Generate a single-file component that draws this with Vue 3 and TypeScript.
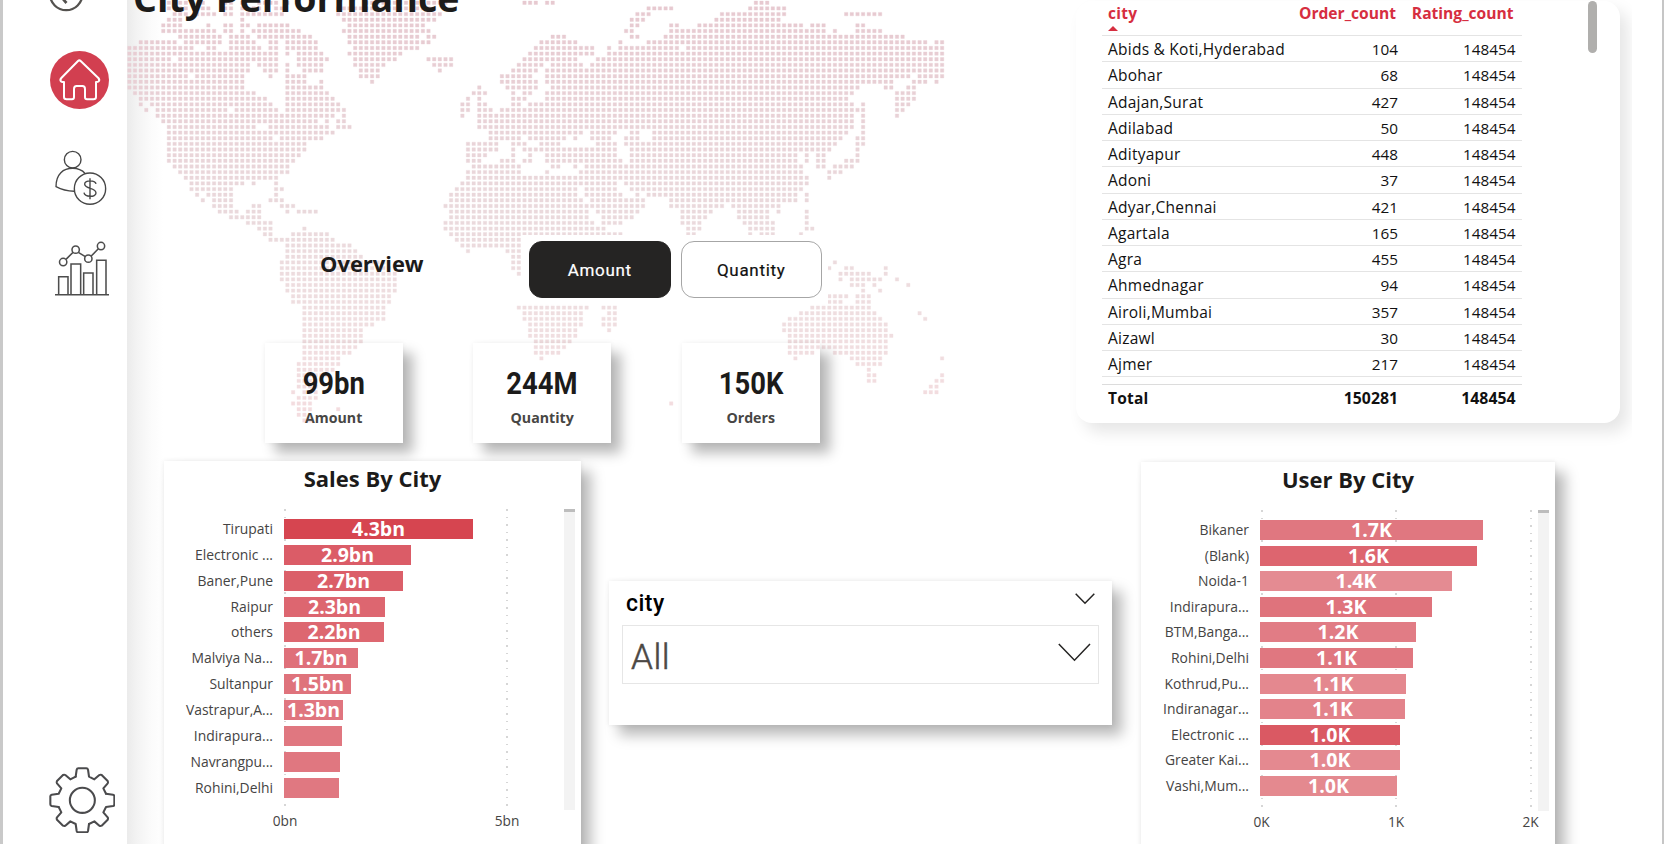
<script setup lang="ts">
interface Bar {
  label: string
  value: string
  width: number
  color: string
}
interface Chart {
  id: string
  title: string
  bars: Bar[]
  ticks: { at: number; text: string }[]
}

const PITCH = 5.644
const DOT = 3.4

// Land cells of the dotted world map, one entry per row, as column ranges.
const mapRows: string[] = [
  '7-10,13,17-18,20,23-26,28,42-56,70-72,74-75,111-113',
  '7-10,13-14,17-18,20,22-23,26-27,37-54,92-96,110-116',
  '8-10,12-15,17-18,20-27,37-55,90-92,105-116,127-133',
  '7-9,20,38-54,89-91,104-115',
  '6-9,14,17-18,20-21,23-28,39-52,89-90,96-97,101-119,121-123,129-130',
  '6-15,17-18,20,22-30,38-53,88-89,96-123,125,129-133',
  '9-16,18-21,23-32,39-51,53-54,75-77,89-90,95-137',
  '2-8,10-16,18-22,25-26,28-33,39-53,73-79,87,92-141,143-144',
  '0-11,14-15,18-23,25-26,28-33,40-51,72-82,85,87-97,99-144',
  '0-26,28,30-34,39-48,71-82,85-144',
  '0-7,9-26,30-35,40-47,53-57,70-79,83-144',
  '0-21,23-26,28,30-34,40-45,54-57,69-73,75-80,82-144',
  '0-21,24-26,28,31-34,41-44,55,68-72,74-144',
  '0-10,12-20,25,28-31,41-44,66-71,74-138,140-144',
  '0-20,28-31,34,43,66-72,74-135,139-141,143',
  '0-20,28-34,62,67-72,75-129,134-135,138-139',
  '1-22,28-35,61-63,68,70-71,74-128,136-139',
  '2-24,28-36,60,62,68-70,74-127,136-139',
  '2,4-25,28-37,59-60,62-63,68-69,71-128,130,136-138',
  '3,5-17,19-26,28-38,59-60,62-64,66-130,136-137',
  '5-36,38,59,62-128,130,136',
  '6-33,35,37-38,62-128,130',
  '7-22,25-35,37-39,62-128,130',
  '7-23,24-36,64-80,82-86,89-90,93-127,130',
  '7-25,27-34,64-69,71-77,79,82-85,88-90,93-126,129-130',
  '7-31,60-65,68-70,73-76,83-86,88-125,129-130',
  '7-31,60-65,68,70-86,89-124,129',
  '7-30,60-63,68,71,74-86,89-118,120,122-123,129',
  '7-29,60-62,66-68,70-71,74-87,89-118,120,122-123,127-129',
  '8-28,61-69,75-76,79,81-87,88-119,122-123,125-128',
  '9-28,60-69,74,80-119,124-126',
  '10-26,60-120,124',
  '11-20,22,26,59-86,88-120',
  '11-18,26-27,58-79,81-86,89-119',
  '12,14-18,26,57-79,81-87,90,92-118,120',
  '13,15-18,25-27,57-80,82-91,96-118,120',
  '15-18,22-23,27-29,56-81,82-91,96-105,107-114,115',
  '16-19,21-23,28,30-33,57-81,83-90,98-103,108-113,115,120',
  '18-23,57-81,84-89,98-102,108-113,120',
  '21-25,56-82,84-87,98-101,109-114,120',
  '23-25,31,56-84,99-101,110-114,120-121',
  '24-25,29-35,57-87,99-100,110,112-114,119',
  '25-36,58-88',
  '28-39,59-88',
  '28-40,60,67-87',
  '28-41,68-87',
  '27-45,68-86,125',
  '27-46,68-85,124,127-128,134',
  '27-47,69-84,126-131,134',
  '27-47,70-80,126,128-133,136',
  '28-47,70-80,128-130,132,138',
  '28-47,70-80,130,133',
  '29-46,70-80,124-127,129-131',
  '29-46,70-80,122-126,129-131',
  '31-45,69-81,84-86,121-131',
  '31-45,70-80,85-86,119-132,140',
  '31-45,70-80,84-86,117-133,141',
  '31-43,71-80,84-86,116-134',
  '31-41,71-79,85,116-134',
  '31-41,71-79,117-135',
  '31-41,72-78,117-134',
  '31-40,72-77,117-134',
  '31-39,72-76,117-121,125-134',
  '31-37,73,118,128-133,144',
  '30-37,129-133',
  '30-36,131',
  '30-35,131-132,144',
  '30-33,131-132,143-144',
  '30-33,142-143',
  '29,31-33,141-143',
  '30-33',
  '29-32,96',
  '30-32,37',
  '30-31',
  '31-32',
]

const mapPath = mapRows
  .map((row, r) =>
    row
      .split(',')
      .map((range) => {
        const [from, to = from] = range.split('-').map(Number)
        let d = ''
        for (let c = from; c <= to; c++) {
          const x = (2.4 + c * PITCH - DOT / 2).toFixed(1)
          const y = (2.8 + r * PITCH - DOT / 2).toFixed(1)
          d += `M${x} ${y}h${DOT}v${DOT}h-${DOT}z`
        }
        return d
      })
      .join(''),
  )
  .join('')

const kpis = [
  { value: '99bn', label: 'Amount' },
  { value: '244M', label: 'Quantity' },
  { value: '150K', label: 'Orders' },
]

const cities: [string, number][] = [
  ['Abids & Koti,Hyderabad', 104],
  ['Abohar', 68],
  ['Adajan,Surat', 427],
  ['Adilabad', 50],
  ['Adityapur', 448],
  ['Adoni', 37],
  ['Adyar,Chennai', 421],
  ['Agartala', 165],
  ['Agra', 455],
  ['Ahmednagar', 94],
  ['Airoli,Mumbai', 357],
  ['Aizawl', 30],
  ['Ajmer', 217],
]

const bar = (label: string, value: string, width: number, color: string): Bar => ({ label, value, width, color })

const sales: Chart = {
  id: 'sales',
  title: 'Sales By City',
  bars: [
    bar('Tirupati', '4.3bn', 189, '#d64550'),
    bar('Electronic ...', '2.9bn', 127, '#db5c67'),
    bar('Baner,Pune', '2.7bn', 119, '#db5f69'),
    bar('Raipur', '2.3bn', 101, '#dd6670'),
    bar('others', '2.2bn', 100, '#dd6770'),
    bar('Malviya Na...', '1.7bn', 74, '#df707a'),
    bar('Sultanpur', '1.5bn', 67, '#df737c'),
    bar('Vastrapur,A...', '1.3bn', 59, '#e0757f'),
    bar('Indirapura...', '', 58, '#e07780'),
    bar('Navrangpu...', '', 56, '#e07780'),
    bar('Rohini,Delhi', '', 55, '#e07881'),
  ],
  ticks: [
    { at: 0, text: '0bn' },
    { at: 222, text: '5bn' },
  ],
}

const users: Chart = {
  id: 'users',
  title: 'User By City',
  bars: [
    bar('Bikaner', '1.7K', 223, '#e07780'),
    bar('(Blank)', '1.6K', 217, '#dd656f'),
    bar('Noida-1', '1.4K', 192, '#e48b92'),
    bar('Indirapura...', '1.3K', 172, '#df737c'),
    bar('BTM,Banga...', '1.2K', 156, '#e17c85'),
    bar('Rohini,Delhi', '1.1K', 153, '#e07780'),
    bar('Kothrud,Pu...', '1.1K', 146, '#e4888f'),
    bar('Indiranagar...', '1.1K', 145, '#e3838b'),
    bar('Electronic ...', '1.0K', 140, '#da5963'),
    bar('Greater Kai...', '1.0K', 140, '#e48990'),
    bar('Vashi,Mum...', '1.0K', 137, '#e4898f'),
  ],
  ticks: [
    { at: 0, text: '0K' },
    { at: 134.5, text: '1K' },
    { at: 269, text: '2K' },
  ],
}

const gearQuarters = [0, 90, 180, 270]
</script>

<template>
  <div class="page">
    <nav class="rail">
      <svg class="back" viewBox="0 0 36 24" fill="none" stroke="#54524f" stroke-width="2.3">
        <circle cx="18.200" cy="6" r="16.200" />
        <path d="M26 7H12M19.500 -1.500l-8 8.500l7 8" stroke-width="2.700" />
      </svg>
      <svg class="home" viewBox="0 0 177 174">
        <ellipse cx="88.500" cy="87" rx="88.500" ry="87" fill="#d23f50" />
        <path
          d="M84 30q4-4 8 0L145 81q5 6 1 10q-2 2-8 2V138q0 7-8 7H111q-6 0-6-6V114q0-9-8-9H80q-8 0-8 9V139q0 6-6 6H50q-8 0-8-7V93q-6 0-9-2q-4-4 1-10z"
          fill="none" stroke="#fff" stroke-width="6" stroke-linejoin="round" />
      </svg>
      <svg class="people" viewBox="0 0 156 166" fill="none" stroke="#474747" stroke-width="4.200">
        <circle cx="53" cy="29" r="25" />
        <path d="M57 124Q28 123 3 110C3 72 25 55 53 55Q76 55 91 71" />
        <circle cx="105" cy="116" r="47" />
        <path d="M105 85V148M123 102C121 90 89 89 89 102C89 118 123 112 123 129C123 143 89 142 87 128" />
      </svg>
      <svg class="stats" viewBox="0 0 162 164" fill="none" stroke="#4d4d4d" stroke-width="4.600">
        <path d="M0 161H162M11 161V107H39V161M48 161V69H77V161M86 161V96H114V161M125 161V58H153V161" />
        <path d="M33 55L54 34M70 34L91 47M108 46L130 23" />
        <circle cx="24.500" cy="63" r="11" />
        <circle cx="62" cy="26" r="11" />
        <circle cx="100" cy="53" r="11" />
        <circle cx="138" cy="15" r="11" />
      </svg>
      <svg class="gear" viewBox="-100 -100 200 200" fill="none" stroke="#4b4b4d" stroke-width="6.200" stroke-linejoin="round">
        <circle r="37.500" />
        <path
          v-for="angle in gearQuarters" :key="angle" :transform="`rotate(${angle})`" stroke-linecap="round"
          d="M-20 -71L-17 -92Q-16 -96 -12 -96H12Q16 -96 17 -92L20 -71L36 -63L51 -76Q54 -78 58 -76L76 -58Q78 -54 76 -51L63 -36L71 -20" />
      </svg>
    </nav>

    <main class="board">
      <svg class="world" width="818" height="424" viewBox="0 0 818 424">
        <defs>
          <linearGradient id="ink" x1="0" y1="0" x2="0" y2="424" gradientUnits="userSpaceOnUse">
            <stop offset="0" stop-color="#e7c9d0" />
            <stop offset="0.5" stop-color="#ead9dc" />
            <stop offset="0.75" stop-color="#efdee0" />
            <stop offset="1" stop-color="#f4dcdf" />
          </linearGradient>
        </defs>
        <path :d="mapPath" fill="url(#ink)" stroke="url(#ink)" stroke-opacity="0.4" stroke-width="0.9" />
      </svg>

      <div class="top">
        <section class="summary">
          <h1>City Performance</h1>
          <div class="controls">
            <h2>Overview</h2>
            <div class="switch">
              <button class="on">Amount</button>
              <button>Quantity</button>
            </div>
          </div>
          <div class="kpis">
            <div v-for="k in kpis" :key="k.label" class="kpi">
              <strong>{{ k.value }}</strong>
              <span>{{ k.label }}</span>
            </div>
          </div>
        </section>

        <div class="table-clip">
          <section class="table-card">
            <div class="table">
              <div class="row head">
                <span>city<i class="sort"></i></span><span>Order_count</span><span>Rating_count</span>
              </div>
              <div v-for="[name, orders] in cities" :key="name" class="row">
                <span>{{ name }}</span><span>{{ orders }}</span><span>148454</span>
              </div>
              <div class="row total"><span>Total</span><span>150281</span><span>148454</span></div>
            </div>
            <div class="thumb"></div>
          </section>
        </div>
      </div>

      <div class="bottom">
        <template v-for="chart in [sales, users]" :key="chart.id">
          <section v-if="chart.id === 'users'" class="slicer">
            <header>
              <span>city</span>
              <svg width="20" height="12" viewBox="0 0 20 12"><path d="M.7 .8L10 10.300L19.300 .8" /></svg>
            </header>
            <div class="select">
              <span>All</span>
              <svg width="33" height="19" viewBox="0 0 33 19"><path d="M.8 1L16.500 17.200L32 1" /></svg>
            </div>
          </section>
          <section class="chart" :class="chart.id">
            <h3>{{ chart.title }}</h3>
            <div class="plot">
              <div class="bars">
                <div v-for="t in chart.ticks" :key="t.text" class="tick" :style="{ '--at': t.at + 'px' }">
                  <span>{{ t.text }}</span>
                </div>
                <div v-for="b in chart.bars" :key="b.label" class="line">
                  <span class="name">{{ b.label }}</span>
                  <span class="fill" :style="{ width: b.width + 'px', background: b.color }">{{ b.value }}</span>
                </div>
              </div>
              <div class="track"></div>
            </div>
          </section>
        </template>
      </div>
    </main>
  </div>
</template>

<style>
body {
  margin: 0;
  overflow: hidden;
}
</style>

<style scoped>
.page {
  box-sizing: border-box;
  width: 1664px;
  height: 844px;
  display: flex;
  overflow: hidden;
  background: #fff;
  border-left: 3px solid #c9c9c9;
  border-right: 2px solid #c6c6c6;
  font-family: 'Open Sans', 'Noto Sans', sans-serif;
  color: #1c1b1a;
}
h1, h2, h3 {
  margin: 0;
  font-weight: 700;
}
svg {
  display: block;
  flex: none;
}

.rail {
  width: 124px;
  flex: none;
  display: flex;
  flex-direction: column;
}
.back { width: 36px; height: 24px; margin: -12px 0 0 45px; }
.home { width: 59px; height: 58px; margin: 39px 0 0 47px; }
.people { width: 52px; height: 55.300px; margin: 41px 0 0 52px; }
.stats { width: 54px; height: 54.700px; margin: 36px 0 0 52px; }
.gear { width: 66.700px; height: 66.700px; margin: auto 0 10.700px 45.700px; }

.board {
  position: relative;
  flex: 1;
  min-width: 0;
  height: 844px;
  background: linear-gradient(90deg, #ebebeb 0, #f3f3f3 10px, #fbfbfb 24px, #fff 36px);
}
.world {
  position: absolute;
  left: 0;
  top: 0;
}
.top {
  position: relative;
  display: flex;
  height: 461px;
}
.summary {
  width: 926px;
  flex: none;
}
h1 {
  margin: -26px 0 0 6px;
  height: 48px;
  font-size: 37.600px;
  line-height: 48px;
  white-space: nowrap;
}
.controls {
  display: flex;
  margin-top: 213px;
  height: 69px;
}
h2 {
  width: 202px;
  margin-left: 193px;
  font-size: 21.900px;
  line-height: 58px;
}
.switch {
  box-sizing: border-box;
  display: flex;
  gap: 10px;
  width: 306px;
  height: 69px;
  padding: 6px 6px 6px 7px;
  background: #fff;
}
button {
  box-sizing: border-box;
  width: 141.500px;
  height: 57px;
  padding: 1px 0 0;
  border: 1px solid #a6a6a6;
  border-radius: 13px;
  background: #fff;
  color: #111;
  font: 400 17px/20px Roboto, sans-serif;
  letter-spacing: 0.7px;
  -webkit-text-stroke: 0.2px currentColor;
}
button.on {
  background: #252423;
  border-color: #252423;
  color: #fff;
}
.kpis {
  display: flex;
  gap: 70.500px;
  margin: 39px 0 0 137.700px;
}
.kpi {
  width: 138px;
  height: 99.500px;
  display: flex;
  flex-direction: column;
  align-items: center;
  box-shadow: 10px 10px 12px rgba(0, 0, 0, 0.28), 0 0 5px rgba(0, 0, 0, 0.06);
}
.kpi strong {
  margin-top: 23px;
  font: 700 31.500px/36px Roboto, sans-serif;
  transform: scaleX(0.87);
}
.kpi span {
  margin-top: 6px;
  font-size: 14.200px;
  line-height: 20px;
  font-weight: 700;
  color: #474644;
}

.table-clip {
  width: 579px;
  padding: 1px 0 0 23px;
  box-sizing: border-box;
  overflow: hidden;
}
.table-card {
  display: flex;
  box-sizing: border-box;
  width: 544px;
  height: 422px;
  padding-left: 26px;
  border-radius: 16px;
  background: #fff;
  box-shadow: 8px 9px 16px rgba(0, 0, 0, 0.1);
}
.table {
  width: 420px;
}
.row {
  display: grid;
  grid-template-columns: 190px 100px 117.500px;
  padding-left: 6px;
  height: 25.250px;
  line-height: 26px;
  border-bottom: 1px solid #e4e4e4;
  font-size: 15.500px;
  color: #111;
  white-space: nowrap;
}
.row span:first-child {
  letter-spacing: 0.240px;
}
.row span:not(:first-child) {
  text-align: right;
  font-size: 15.300px;
}
.row.head {
  height: 34px;
  line-height: 24px;
  color: #d62e40;
  font-weight: 700;
}
.row.head span:not(:first-child) {
  font-size: 15.600px;
  padding-right: 2px;
}
.sort {
  display: block;
  width: 0;
  margin-top: 1px;
  border: 5.500px solid transparent;
  border-top: 0;
  border-bottom: 5.500px solid #d62e40;
}
.row.total {
  margin-top: 7px;
  border-top: 1px solid #dcdcdc;
  border-bottom: 0;
  line-height: 26px;
  font-weight: 700;
}
.row.total span:not(:first-child) {
  font-size: 15.800px;
}
.thumb {
  width: 9px;
  height: 52px;
  margin-left: 66px;
  border-radius: 4.500px;
  background: #b0afad;
}

.bottom {
  position: relative;
  display: flex;
  align-items: flex-start;
  height: 383px;
  padding-left: 37px;
}
.chart,
.slicer {
  flex: none;
  background: #fff;
  box-shadow: 10px 10px 13px rgba(0, 0, 0, 0.28), 0 0 5px rgba(0, 0, 0, 0.08);
}
.chart {
  width: 417px;
  height: 400px;
}
.chart.users {
  width: 414px;
  margin: 1px 0 0 29px;
}
h3 {
  height: 48px;
  line-height: 35px;
  font-size: 22px;
  text-align: center;
}
.plot {
  display: flex;
}
.bars {
  position: relative;
  width: 400px;
  height: 301px;
  padding-top: 10px;
  box-sizing: border-box;
}
.users .bars {
  width: 397px;
}
.line {
  position: relative;
  display: flex;
  align-items: flex-start;
  height: 25.870px;
}
.users .line {
  height: 25.600px;
}
.name {
  width: 109px;
  margin-right: 11px;
  text-align: right;
  font-size: 13.900px;
  line-height: 20.500px;
  color: #454443;
  white-space: nowrap;
}
.users .name {
  width: 108px;
}
.fill {
  height: 20px;
  line-height: 19px;
  text-align: center;
  font-size: 19.500px;
  font-weight: 700;
  color: #fff;
}
.tick {
  position: absolute;
  top: 0;
  bottom: 0;
  left: calc(120px + var(--at));
  width: 2px;
  background: repeating-linear-gradient(180deg, #d6d6d6 0, #d6d6d6 1.500px, transparent 1.500px, transparent 7.570px);
}
.users .tick {
  left: calc(119.500px + var(--at));
}
.tick span {
  position: absolute;
  top: 301px;
  left: -29px;
  width: 60px;
  text-align: center;
  font-size: 13.700px;
  line-height: 22px;
  color: #454443;
}
.track {
  box-sizing: border-box;
  width: 11px;
  height: 301px;
  border-top: 3px solid #bdbdbd;
  background: #f3f3f3;
}

.slicer {
  box-sizing: border-box;
  width: 503px;
  height: 144px;
  margin: 120px 0 0 28px;
  padding: 0 13px;
}
.slicer header {
  display: flex;
  justify-content: space-between;
  height: 44px;
  padding: 0 4px;
  font: 500 23px/46px Roboto, sans-serif;
  letter-spacing: 0.5px;
  color: #000;
}
.slicer header svg {
  margin-top: 12px;
}
.slicer path {
  fill: none;
  stroke: #252423;
  stroke-width: 1.500;
}
.select {
  box-sizing: border-box;
  display: flex;
  justify-content: space-between;
  height: 59px;
  padding: 0 7px 0 8px;
  border: 1px solid #e6e6e6;
  font: 300 35px/64px Roboto, sans-serif;
  letter-spacing: 0.500px;
  -webkit-text-stroke: 0.500px currentColor;
  color: #4c4844;
}
.select svg {
  margin-top: 16.500px;
}
</style>
